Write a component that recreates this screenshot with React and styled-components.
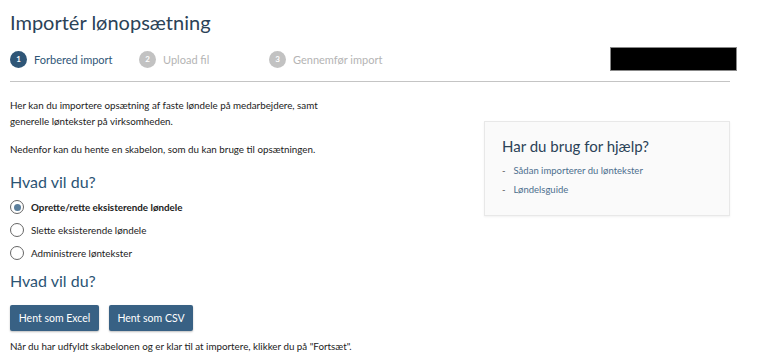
import React, { useState } from 'react';
import styled, { createGlobalStyle } from 'styled-components';

const GlobalStyle = createGlobalStyle`
  * { box-sizing: border-box; }
  body {
    margin: 0;
    background: #ffffff;
    font-family: Lato, 'Open Sans', sans-serif;
    color: #222;
  }
`;

const Page = styled.div`
  width: 781px;
  padding: 10px 44px 0 10px;
`;

const Title = styled.h1`
  margin: 0;
  font-size: 20px;
  font-weight: 400;
  line-height: 24px;
  color: #2b4257;
`;

const StepBar = styled.div`
  display: flex;
  align-items: center;
  margin-top: 13px;
  padding-bottom: 10px;
  border-bottom: 1px solid #c4c4c4;
  width: 720px;
`;

const Steps = styled.ol`
  display: flex;
  align-items: center;
  list-style: none;
  margin: 0;
  padding: 0;
  flex: 1;
`;

const Step = styled.li`
  display: flex;
  align-items: center;
  gap: 7px;
  width: ${(p) => p.$width}px;
  font-size: 11px;
  color: ${(p) => (p.$active ? '#2f5677' : '#b4b4b4')};
`;

const StepNum = styled.span`
  width: 17px;
  height: 17px;
  border-radius: 50%;
  background: ${(p) => (p.$active ? '#2f5677' : '#c2c2c2')};
  color: #fff;
  font-size: 8px;
  font-weight: 700;
  display: flex;
  align-items: center;
  justify-content: center;
`;

const Redacted = styled.div`
  width: 127px;
  height: 24px;
  background: #000;
  border: 1px solid #888;
  margin-right: -7px;
`;

const Body = styled.div`
  display: grid;
  grid-template-columns: 474px 246px;
  margin-top: 15px;
`;

const Main = styled.div``;

const Text = styled.p`
  margin: ${(p) => p.$top || 0}px 0 0;
  font-size: 9.8px;
  line-height: 16px;
  color: #222;
`;

const SubHeading = styled.h2`
  margin: ${(p) => p.$top || 0}px 0 0;
  font-size: 16px;
  font-weight: 400;
  line-height: 20px;
  color: #2b5474;
`;

const Radios = styled.div`
  display: flex;
  flex-direction: column;
  gap: 7px;
  margin: 7px 0 10px;
`;

const RadioRow = styled.label`
  display: flex;
  align-items: center;
  gap: 7px;
  height: 16px;
  font-size: 9.8px;
  font-weight: ${(p) => (p.$checked ? 700 : 400)};
  color: #222;
  cursor: pointer;
`;

const RadioDot = styled.span`
  width: 14px;
  height: 14px;
  border-radius: 50%;
  border: 1.5px solid #666;
  display: flex;
  align-items: center;
  justify-content: center;
  &::after {
    content: '';
    width: 7px;
    height: 7px;
    border-radius: 50%;
    background: ${(p) => (p.$checked ? '#5b7f9c' : 'transparent')};
  }
`;

const Buttons = styled.div`
  display: flex;
  gap: 10px;
  margin: 14px 0 7px;
`;

const Button = styled.button`
  width: ${(p) => p.$width}px;
  height: 26px;
  border: none;
  border-radius: 2px;
  background: #386184;
  color: #fff;
  font-family: inherit;
  font-size: 10.5px;
  box-shadow: 0 1px 2px rgba(0, 0, 0, 0.25);
  cursor: pointer;
`;

const HelpBox = styled.aside`
  margin-top: 24px;
  height: 95px;
  background: #fafafa;
  border: 1px solid #e8e8e8;
  box-shadow: 0 1px 2px rgba(0, 0, 0, 0.06);
  padding: 14px 17px;
`;

const HelpTitle = styled.h3`
  margin: 0 0 8px;
  font-size: 15px;
  font-weight: 400;
  line-height: 20px;
  color: #2b4257;
`;

const HelpList = styled.ul`
  list-style: none;
  margin: 0;
  padding: 0;
  display: flex;
  flex-direction: column;
  gap: 5px;
`;

const HelpItem = styled.li`
  display: flex;
  gap: 8px;
  font-size: 9.5px;
  line-height: 14px;
  color: #555;
`;

const HelpLink = styled.a`
  color: #4d6f8e;
  text-decoration: none;
`;

const steps = [
  { n: 1, label: 'Forbered import', width: 129 },
  { n: 2, label: 'Upload fil', width: 130 },
  { n: 3, label: 'Gennemfør import', width: 140 },
];

const options = ['Oprette/rette eksisterende løndele', 'Slette eksisterende løndele', 'Administrere løntekster'];

export default function App() {
  const [choice, setChoice] = useState(0);
  return (
    <>
      <GlobalStyle />
      <Page>
        <Title>Importér lønopsætning</Title>
        <StepBar>
          <Steps>
            {steps.map((s) => (
              <Step key={s.n} $width={s.width} $active={s.n === 1}>
                <StepNum $active={s.n === 1}>{s.n}</StepNum>
                {s.label}
              </Step>
            ))}
          </Steps>
          <Redacted />
        </StepBar>
        <Body>
          <Main>
            <Text>
              Her kan du importere opsætning af faste løndele på medarbejdere, samt
              <br />
              generelle løntekster på virksomheden.
            </Text>
            <Text $top={12}>Nedenfor kan du hente en skabelon, som du kan bruge til opsætningen.</Text>
            <SubHeading $top={15}>Hvad vil du?</SubHeading>
            <Radios>
              {options.map((o, i) => (
                <RadioRow key={o} $checked={choice === i} onClick={() => setChoice(i)}>
                  <RadioDot $checked={choice === i} />
                  {o}
                </RadioRow>
              ))}
            </Radios>
            <SubHeading>Hvad vil du?</SubHeading>
            <Buttons>
              <Button $width={89}>Hent som Excel</Button>
              <Button $width={84}>Hent som CSV</Button>
            </Buttons>
            <Text>Når du har udfyldt skabelonen og er klar til at importere, klikker du på "Fortsæt".</Text>
          </Main>
          <HelpBox>
            <HelpTitle>Har du brug for hjælp?</HelpTitle>
            <HelpList>
              <HelpItem>
                -<HelpLink href="#">Sådan importerer du løntekster</HelpLink>
              </HelpItem>
              <HelpItem>
                -<HelpLink href="#">Løndelsguide</HelpLink>
              </HelpItem>
            </HelpList>
          </HelpBox>
        </Body>
      </Page>
    </>
  );
}
